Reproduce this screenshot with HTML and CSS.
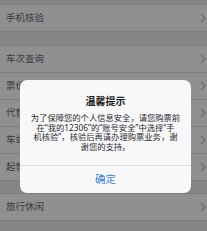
FILE: index.html
```html
<!DOCTYPE html>
<html lang="zh-CN">
<head>
<meta charset="utf-8">
<link rel="stylesheet" href="styles.css">
</head>
<body>
<div class="page">
  <div class="group first">
    <div class="row"><span class="label">手机核验</span><svg class="chev" width="6" height="10" viewBox="0 0 6 10"><polyline points="1,1 5,5 1,9"/></svg></div>
  </div>
  <div class="group second">
    <div class="row"><span class="label">车次查询</span><svg class="chev" width="6" height="10" viewBox="0 0 6 10"><polyline points="1,1 5,5 1,9"/></svg></div>
    <div class="row"><span class="label">票价查询</span><svg class="chev" width="6" height="10" viewBox="0 0 6 10"><polyline points="1,1 5,5 1,9"/></svg></div>
    <div class="row"><span class="label">代售点查询</span><svg class="chev" width="6" height="10" viewBox="0 0 6 10"><polyline points="1,1 5,5 1,9"/></svg></div>
    <div class="row"><span class="label">车站大屏</span><svg class="chev" width="6" height="10" viewBox="0 0 6 10"><polyline points="1,1 5,5 1,9"/></svg></div>
    <div class="row"><span class="label">起售时间</span><svg class="chev" width="6" height="10" viewBox="0 0 6 10"><polyline points="1,1 5,5 1,9"/></svg></div>
  </div>
  <div class="group third">
    <div class="row"><span class="label">旅行休闲</span><svg class="chev" width="6" height="10" viewBox="0 0 6 10"><polyline points="1,1 5,5 1,9"/></svg></div>
  </div>
</div>
<div class="overlay">
  <div class="dialog">
    <div class="title">温馨提示</div>
    <div class="message">为了保障您的个人信息安全，请您购票前<br>在“我的12306”的“账号安全”中选择“手<br>机核验”，核验后再请办理购票业务，谢<br>谢您的支持。</div>
    <div class="actions"><span class="ok">确定</span></div>
  </div>
</div>
</body>
</html>
```
FILE: styles.css
```css
html, body {
  margin: 0;
  padding: 0;
}
body {
  width: 207px;
  height: 231px;
  overflow: hidden;
  background: #858587;
  font-family: "Noto Sans CJK SC", "Noto Sans", sans-serif;
  position: relative;
}
.page {
  padding-top: 4px;
}
.group {
  background: #909092;
  border-top: 1px solid #7d7d80;
}
.second {
  margin-top: 13px;
}
.third {
  margin-top: 12px;
}
.row {
  height: 26px;
  border-bottom: 1px solid #7d7d80;
  display: flex;
  align-items: center;
  justify-content: space-between;
  padding: 0 1px 0 6px;
}
.label {
  font-size: 9.5px;
  color: #3a3a3c;
  line-height: 1;
}
.chev {
  fill: none;
  stroke: #6e6e70;
  stroke-width: 1.3;
}
.overlay {
  position: absolute;
  left: 0;
  top: 0;
  right: 0;
  bottom: 0;
  padding: 80px 0 0 20px;
}
.dialog {
  width: 171px;
  height: 113px;
  background: #f8f8fa;
  border-radius: 7px;
  display: flex;
  flex-direction: column;
  align-items: center;
  box-sizing: border-box;
  padding-top: 14px;
  overflow: hidden;
}
.title {
  font-size: 10px;
  font-weight: bold;
  line-height: 14px;
  color: #1e1e20;
}
.message {
  margin-top: 5px;
  font-family: "Noto Sans", "Noto Sans CJK SC", sans-serif;
  font-size: 8.3px;
  line-height: 9.5px;
  color: #2a2a2c;
  text-align: center;
  white-space: nowrap;
  height: 38px;
}
.actions {
  margin-top: 14px;
  align-self: stretch;
  border-top: 1px solid #dcdcdf;
  height: 27px;
  display: flex;
  align-items: center;
  justify-content: center;
}
.ok {
  font-size: 10.5px;
  color: #3a84c6;
  line-height: 1;
}
```
